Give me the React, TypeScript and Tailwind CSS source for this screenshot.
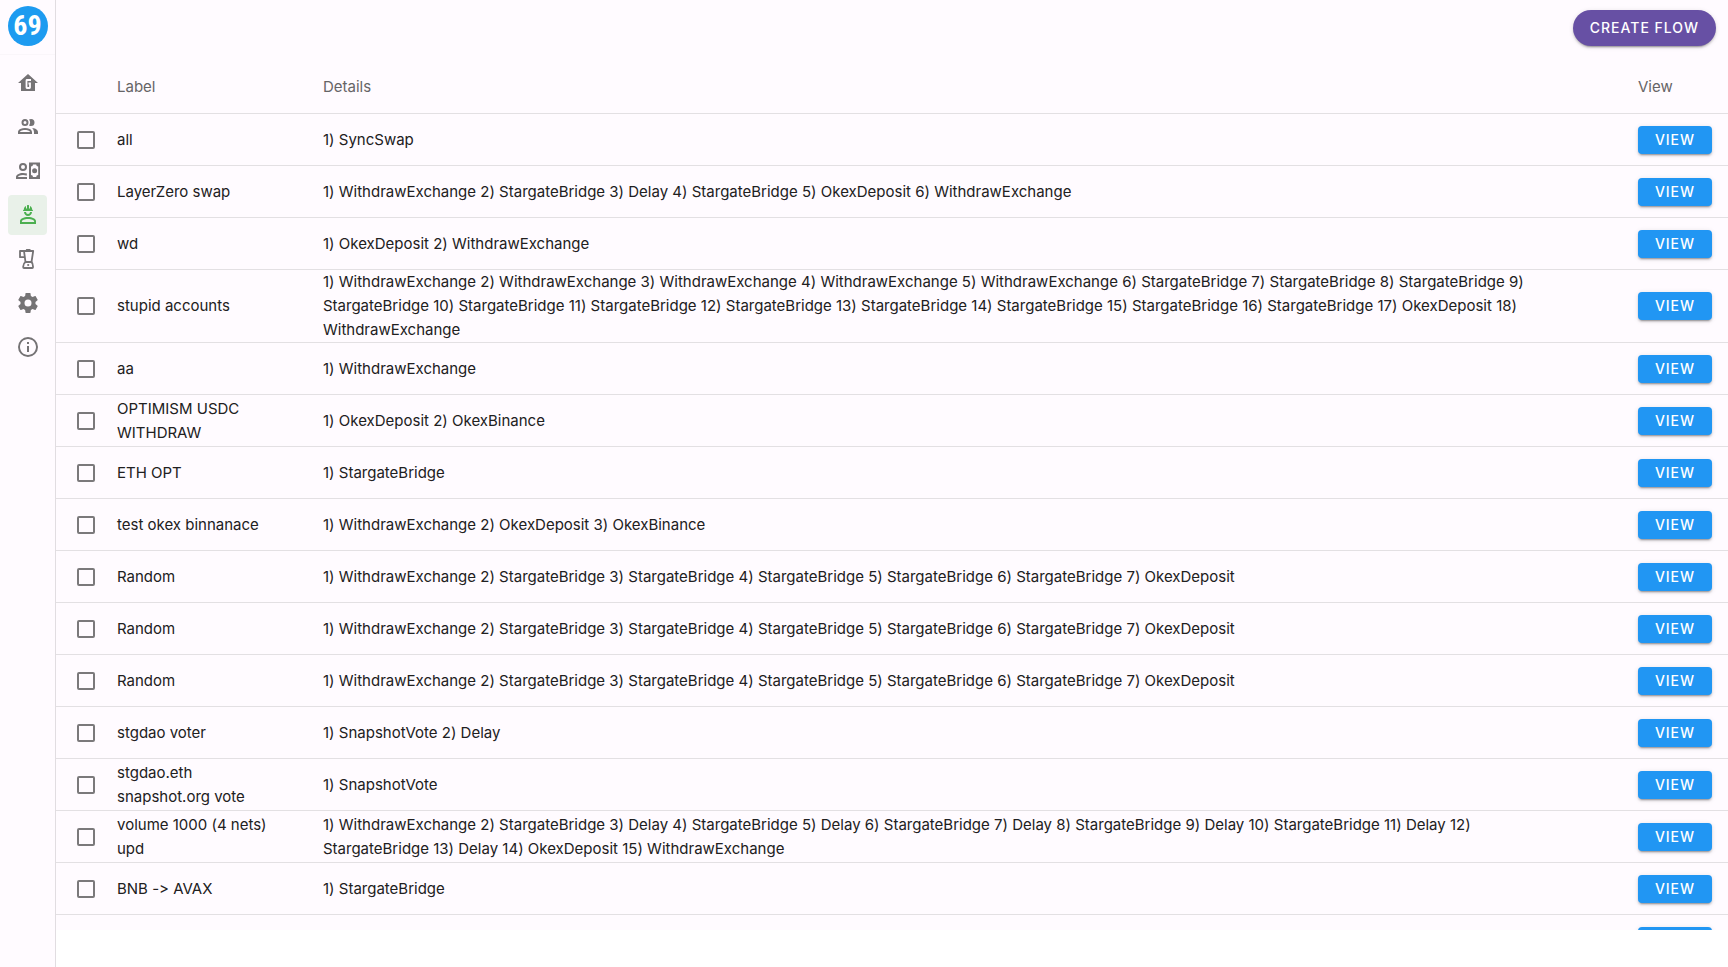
import { useState } from "react";
import type { ReactNode } from "react";

type Flow = { label: string; tasks: string[] };

const W = "WithdrawExchange";
const S = "StargateBridge";
const D = "Delay";
const O = "OkexDeposit";

const randomFlow: Flow = { label: "Random", tasks: [W, S, S, S, S, S, O] };

const flows: Flow[] = [
  { label: "all", tasks: ["SyncSwap"] },
  { label: "LayerZero swap", tasks: [W, S, D, S, O, W] },
  { label: "wd", tasks: [O, W] },
  { label: "stupid accounts", tasks: [W, W, W, W, W, S, S, S, S, S, S, S, S, S, S, S, O, W] },
  { label: "aa", tasks: [W] },
  { label: "OPTIMISM USDC WITHDRAW", tasks: [O, "OkexBinance"] },
  { label: "ETH OPT", tasks: [S] },
  { label: "test okex binnanace", tasks: [W, O, "OkexBinance"] },
  randomFlow,
  randomFlow,
  randomFlow,
  { label: "stgdao voter", tasks: ["SnapshotVote", D] },
  { label: "stgdao.eth snapshot.org vote", tasks: ["SnapshotVote"] },
  { label: "volume 1000 (4 nets) upd", tasks: [W, S, D, S, D, S, D, S, D, S, D, S, D, O, W] },
  { label: "BNB -> AVAX", tasks: [S] },
  { label: "", tasks: [] },
];

const describe = (tasks: string[]) => tasks.map((t, i) => `${i + 1}) ${t}`).join(" ");

const navItems: { name: string; icon: ReactNode }[] = [
  {
    name: "Home",
    icon: (
      <>
        <path d="M12 3L2 12H5V20H19V12H22L12 3Z" />
        <path d="M15 9H11Q10.500 9 10.500 9.500V16.500Q10.500 17 11 17H13.500Q14 17 14 16.500V12.500H12.500" fill="none" stroke="#fffbff" strokeWidth="1.800" />
      </>
    ),
  },
  {
    name: "Accounts",
    icon: (
      <path d="M13.070 10.410A5 5 0 0 0 13.070 4.590A3.390 3.390 0 0 1 15 4A3.500 3.500 0 0 1 15 11A3.390 3.390 0 0 1 13.070 10.410M5.500 7.500A3.500 3.500 0 1 1 9 11A3.500 3.500 0 0 1 5.500 7.500M7.500 7.500A1.500 1.500 0 1 0 9 6A1.500 1.500 0 0 0 7.500 7.500M16 17V19H2V17S2 13 9 13 16 17 16 17M14 17C13.860 16.220 12.670 15 9 15S4.070 16.310 4 17M15.950 13A5.320 5.320 0 0 1 18 17V19H22V17S22 13.370 15.940 13Z" />
    ),
  },
  {
    name: "Withdrawals",
    icon: (
      <path
        fillRule="evenodd"
        d="M11 8A4 4 0 1 0 3 8A4 4 0 1 0 11 8M9 8A2 2 0 1 1 5 8A2 2 0 1 1 9 8M11 20V18.100H1.900V18C1.900 17.420 3.750 15.900 7 15.900C8.530 15.900 9.760 16.230 10.640 16.660L11 14.500C9.870 14.190 8.500 14 7 14C3.130 14 0 15.790 0 18V20ZM13 3.500H24V20H13ZM17 5.500A2 2 0 0 1 15 7.500V16A2 2 0 0 1 17 18H20.200A2 2 0 0 1 22.200 16V7.500A2 2 0 0 1 20.200 5.500ZM18.600 9.300A2.500 2.500 0 1 1 18.600 14.300A2.500 2.500 0 1 1 18.600 9.300Z"
      />
    ),
  },
  {
    name: "Flows",
    icon: (
      <path
        fillRule="evenodd"
        d="M12 14C7.580 14 4 15.790 4 18V21H20V18C20 15.790 16.420 14 12 14M18.100 19.100H5.900V18C5.900 17.360 8.220 15.900 12 15.900S18.100 17.360 18.100 18ZM8 9C8 11.210 9.790 13 12 13S16 11.210 16 9H14A2 2 0 0 1 10 9ZM11.500 2C11.200 2 11 2.210 11 2.500V5.500H10V3S7.750 3.860 7.750 6.750C7.750 6.750 7 6.890 7 8H17C16.950 6.890 16.250 6.750 16.250 6.750C16.250 3.860 14 3 14 3V5.500H13V2.500C13 2.210 12.810 2 12.500 2H11.500Z"
      />
    ),
  },
  {
    name: "Randomizer",
    icon: (
      <g fill="none" stroke="currentColor" strokeWidth="1.800" strokeLinejoin="round">
        <path d="M10.500 3V2.500H14V3" strokeWidth="1.200" />
        <path d="M8 4H17.200L15.500 15H9.500L8 4Z" />
        <path d="M8 4H4V10.200H8.800" />
        <path d="M9.500 15Q7.200 16.500 7.200 19.500V20.200Q7.200 21 8 21H16.200Q17 21 17 20.200V19.500Q17 16.500 15.500 15" />
        <circle cx="12.200" cy="18" r="1.100" fill="currentColor" stroke="none" />
      </g>
    ),
  },
  {
    name: "Settings",
    icon: (
      <path d="M12 15.500A3.500 3.500 0 0 1 8.500 12A3.500 3.500 0 0 1 12 8.500A3.500 3.500 0 0 1 15.500 12A3.500 3.500 0 0 1 12 15.500M19.430 12.970C19.470 12.650 19.500 12.330 19.500 12C19.500 11.670 19.470 11.340 19.430 11L21.540 9.370C21.730 9.220 21.780 8.950 21.660 8.730L19.660 5.270C19.540 5.050 19.270 4.960 19.050 5.050L16.560 6.050C16.040 5.660 15.500 5.320 14.870 5.070L14.500 2.420C14.460 2.180 14.250 2 14 2H10C9.750 2 9.540 2.180 9.500 2.420L9.130 5.070C8.500 5.320 7.960 5.660 7.440 6.050L4.950 5.050C4.730 4.960 4.460 5.050 4.340 5.270L2.340 8.730C2.210 8.950 2.270 9.220 2.460 9.370L4.570 11C4.530 11.340 4.500 11.670 4.500 12C4.500 12.330 4.530 12.650 4.570 12.970L2.460 14.630C2.270 14.780 2.210 15.050 2.340 15.270L4.340 18.730C4.460 18.950 4.730 19.030 4.950 18.950L7.440 17.940C7.960 18.340 8.500 18.680 9.130 18.930L9.500 21.580C9.540 21.820 9.750 22 10 22H14C14.250 22 14.460 21.820 14.500 21.580L14.870 18.930C15.500 18.670 16.040 18.340 16.560 17.940L19.050 18.950C19.270 19.030 19.540 18.950 19.660 18.730L21.660 15.270C21.780 15.050 21.730 14.780 21.540 14.630L19.430 12.970Z" />
    ),
  },
  {
    name: "About",
    icon: (
      <path d="M11 9H13V7H11M12 20C7.590 20 4 16.410 4 12C4 7.590 7.590 4 12 4C16.410 4 20 7.590 20 12C20 16.410 16.410 20 12 20M12 2A10 10 0 0 0 2 12A10 10 0 0 0 12 22A10 10 0 0 0 22 12A10 10 0 0 0 12 2M11 17H13V11H11V17Z" />
    ),
  },
];

function Sidebar() {
  return (
    <nav aria-label="Main" className="flex w-14 shrink-0 flex-col border-r border-[#e1dde1] bg-[#fffbff]">
      <div className="flex h-[55px] shrink-0 items-start justify-center border-b border-[#faf6fa] pt-[6px]">
        <div className="flex size-10 items-center justify-center rounded-full bg-[#1d9bf0] font-['Liberation_Sans_Narrow','Roboto_Condensed','DejaVu_Sans_Condensed',sans-serif] text-[28px] leading-none font-bold text-white">
          69
        </div>
      </div>
      <ul className="flex flex-col gap-1 p-2">
        {navItems.map(({ name, icon }) => (
          <li key={name}>
            <a
              href={`#${name.toLowerCase()}`}
              aria-label={name}
              className={
                name === "Flows"
                  ? "flex h-10 items-center justify-center rounded bg-[#e9f1e9] text-[#4caf50]"
                  : "flex h-10 items-center justify-center rounded text-[#757375]"
              }
            >
              <svg viewBox="0 0 24 24" className="size-6 shrink-0 fill-current" aria-hidden="true">
                {icon}
              </svg>
            </a>
          </li>
        ))}
      </ul>
    </nav>
  );
}

function FlowRow({ flow, index }: { flow: Flow; index: number }) {
  const [checked, setChecked] = useState(false);
  return (
    <tr className="h-[52px]">
      <td className="border-b border-[#e3e0e3] py-0 pr-0 pl-[21px]">
        <input
          type="checkbox"
          aria-label={`Select ${flow.label || `flow ${index + 1}`}`}
          checked={checked}
          onChange={() => setChecked(!checked)}
          className="block size-[18px] appearance-none rounded-xs border-2 border-[#7b797b] checked:border-[#2196f3] checked:bg-[#2196f3]"
        />
      </td>
      <td className="border-b border-[#e3e0e3] py-0 pr-6 pl-4">{flow.label}</td>
      <td className="border-b border-[#e3e0e3] py-0 pr-12 pl-4">{describe(flow.tasks)}</td>
      <td className="border-b border-[#e3e0e3] px-4 py-0">
        <button
          type="button"
          aria-label={`View ${flow.label || `flow ${index + 1}`}`}
          className="flex h-7 w-full items-center justify-center rounded bg-[#2196f3] text-sm font-medium tracking-[1px] text-white shadow-[0_3px_1px_-2px_rgba(0,0,0,0.2),0_2px_2px_0_rgba(0,0,0,0.14),0_1px_5px_0_rgba(0,0,0,0.12)]"
        >
          {flow.tasks.length > 0 && "VIEW"}
        </button>
      </td>
    </tr>
  );
}

export default function App() {
  return (
    <div className="flex h-screen bg-white font-['Inter',sans-serif] text-[15px] leading-6 text-[#212021] [font-variant-ligatures:none]">
      <Sidebar />
      <main className="flex min-w-0 flex-1 flex-col pb-[37px]">
        <div className="flex min-h-0 flex-1 flex-col overflow-hidden bg-[#fffbff]">
          <div className="flex h-[58px] shrink-0 items-start justify-end px-3 pt-[10px]">
            <button
              type="button"
              className="h-9 rounded-full bg-[#6750a4] px-[17px] text-sm font-medium tracking-[1px] text-white shadow-[0_3px_1px_-2px_rgba(0,0,0,0.2),0_2px_2px_0_rgba(0,0,0,0.14),0_1px_5px_0_rgba(0,0,0,0.12)]"
            >
              CREATE FLOW
            </button>
          </div>
          <table className="w-full table-fixed border-separate border-spacing-0 text-left">
            <colgroup>
              <col className="w-[45px]" />
              <col className="w-[206px]" />
              <col />
              <col className="w-[106px]" />
            </colgroup>
            <thead>
              <tr className="h-14 text-[#666466]">
                <th scope="col" className="border-b border-[#e3e0e3] p-0" aria-label="Selected" />
                <th scope="col" className="border-b border-[#e3e0e3] px-4 pt-0.5 pb-0 font-normal">Label</th>
                <th scope="col" className="border-b border-[#e3e0e3] px-4 pt-0.5 pb-0 font-normal">Details</th>
                <th scope="col" className="border-b border-[#e3e0e3] px-4 pt-0.5 pb-0 font-normal">View</th>
              </tr>
            </thead>
            <tbody>
              {flows.map((flow, index) => (
                <FlowRow key={index} flow={flow} index={index} />
              ))}
            </tbody>
          </table>
        </div>
      </main>
    </div>
  );
}
